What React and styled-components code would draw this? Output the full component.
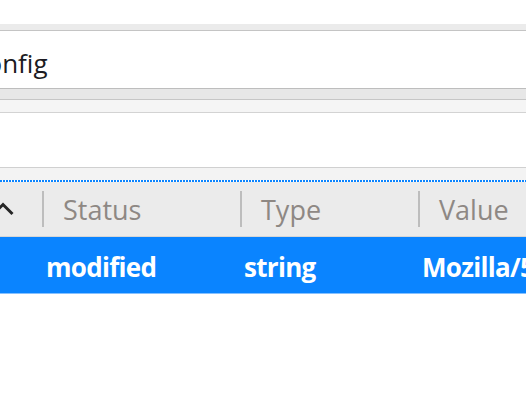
import React from 'react';
import styled, { createGlobalStyle } from 'styled-components';

const OFFSET = 450;

const GlobalStyle = createGlobalStyle`
  html, body {
    margin: 0;
    padding: 0;
    background: #fff;
    overflow: hidden;
  }
`;

const Viewport = styled.div`
  width: 526px;
  height: 394px;
  overflow: hidden;
  background: #fff;
  font-family: "Open Sans", "Noto Sans", sans-serif;
`;

// the screenshot is scrolled sideways, so the page starts left of the window
const Page = styled.div`
  width: ${526 + OFFSET}px;
  margin-left: -${OFFSET}px;
  display: flex;
  flex-direction: column;
`;

const TopSpace = styled.div`
  height: 24px;
`;

const ToolbarEdge = styled.div`
  height: 6px;
  background: #ebebeb;
  border-bottom: 1px solid #c4c4c4;
`;

const UrlField = styled.div`
  height: 57px;
  box-sizing: border-box;
  padding: 6px 0 0 ${OFFSET - 104}px;
  display: flex;
  align-items: center;
  font-size: 26px;
  color: #1c1b22;
`;

const Band = styled.div`
  height: ${(p) => p.$h}px;
  background: ${(p) => p.$bg};
  border-top: ${(p) => (p.$top ? `1px solid ${p.$top}` : 'none')};
  border-bottom: ${(p) => (p.$bottom ? `1px solid ${p.$bottom}` : 'none')};
`;

const SearchArea = styled.div`
  height: 54px;
  background: #fff;
`;

const FocusRing = styled.div`
  height: 2px;
  background: repeating-linear-gradient(to right, #0a84ff 0 2px, transparent 2px 3px);
`;

const Tree = styled.div`
  display: grid;
  grid-template-columns: ${OFFSET + 42}px 198px 178px 1fr;
`;

const HeaderCell = styled.div`
  position: relative;
  height: 54px;
  background: #ebebeb;
  border-bottom: 1px solid #d6d6d6;
  display: flex;
  align-items: center;
  justify-content: ${(p) => (p.$sorted ? 'space-between' : 'flex-start')};
  padding: 0 ${(p) => (p.$sorted ? 28 : 0)}px 0 21px;
  font-size: 27px;
  color: #8e8884;
  white-space: nowrap;
  overflow: hidden;

  &::before {
    content: '';
    display: ${(p) => (p.$first ? 'none' : 'block')};
    position: absolute;
    left: 0;
    top: 9px;
    width: 2px;
    height: 36px;
    background: #bdbdbd;
  }
`;

const Cell = styled.div`
  height: 57px;
  box-sizing: border-box;
  padding: 3px 0 0 4px;
  display: flex;
  align-items: center;
  background: #0a84ff;
  border-bottom: 1px solid #86c1ff;
  color: #fff;
  font-size: 26px;
  font-weight: 700;
  letter-spacing: -0.7px;
  white-space: nowrap;
  overflow: hidden;
`;

const SortArrow = () => (
  <svg width="22" height="14" viewBox="0 0 22 14">
    <path d="M1.5 12 L11 2.5 L20.5 12" fill="none" stroke="#262626" strokeWidth="3" />
  </svg>
);

const columns = ['Preference Name', 'Status', 'Type', 'Value'];
const row = ['general.useragent.override', 'modified', 'string', 'Mozilla/5.0 (X11; Linux x86_64)'];

export default function App() {
  return (
    <Viewport>
      <GlobalStyle />
      <Page>
        <TopSpace />
        <ToolbarEdge />
        <UrlField>about:config</UrlField>
        <Band $h={10} $bg="#e7e7e7" $top="#bdbdbd" $bottom="#c6c6c6" />
        <Band $h={12} $bg="#f5f5f5" $bottom="#d3d3d3" />
        <SearchArea />
        <Band $h={12} $bg="#f3f3f3" $top="#d0d0d0" />
        <FocusRing />
        <Tree>
          {columns.map((c, i) => (
            <HeaderCell key={c} $first={i === 0} $sorted={i === 0}>
              {c}
              {i === 0 && <SortArrow />}
            </HeaderCell>
          ))}
          {row.map((v, i) => (
            <Cell key={i}>{v}</Cell>
          ))}
        </Tree>
      </Page>
    </Viewport>
  );
}
